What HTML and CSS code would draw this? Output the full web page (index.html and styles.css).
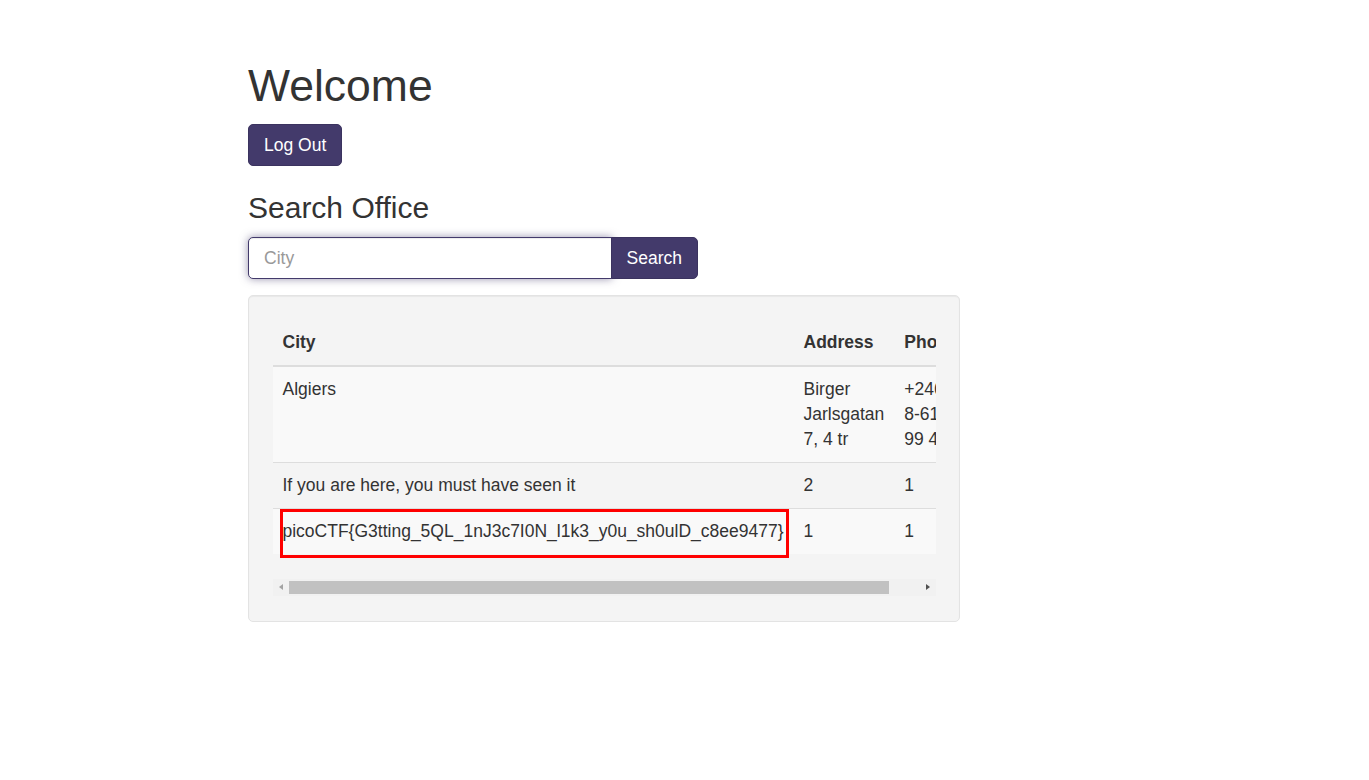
FILE: index.html
```html
<!DOCTYPE html>
<html lang="en">
<head>
<meta charset="utf-8">
<title>Welcome</title>
<link rel="stylesheet" href="styles.css">
</head>
<body>
<div class="page">
  <h1 class="title">Welcome</h1>
  <button class="btn" type="button">Log Out</button>
  <h2 class="subtitle">Search Office</h2>
  <form class="search">
    <input class="search-input" type="text" placeholder="City">
    <button class="btn btn-attached" type="button">Search</button>
  </form>
  <div class="well">
    <div class="scroll-view">
      <table class="offices">
        <thead>
          <tr><th>City</th><th>Address</th><th>Phone</th></tr>
        </thead>
        <tbody>
          <tr class="odd"><td>Algiers</td><td>Birger Jarlsgatan 7, 4 tr</td><td>+246 8-611 99 40</td></tr>
          <tr><td>If you are here, you must have seen it</td><td>2</td><td>1</td></tr>
          <tr class="odd"><td class="flag">picoCTF{G3tting_5QL_1nJ3c7I0N_l1k3_y0u_sh0ulD_c8ee9477}</td><td>1</td><td>1</td></tr>
        </tbody>
      </table>
    </div>
    <div class="scrollbar">
      <div class="arrow arrow-left"></div>
      <div class="track"><div class="thumb"></div></div>
      <div class="arrow arrow-right"></div>
    </div>
  </div>
</div>
</body>
</html>
```

FILE: styles.css
```css
html, body {
  margin: 0;
  padding: 0;
  background: #fff;
}

body {
  font-family: "Liberation Sans", Arial, sans-serif;
  font-size: 17.5px;
  line-height: 25px;
  color: #333;
}

.page {
  width: 712px;
  padding: 36px 0 0 248px;
}

.title {
  margin: 25px 0 13.5px;
  font-size: 44.5px;
  font-weight: normal;
  line-height: 49.5px;
}

.btn {
  display: inline-block;
  margin: 0;
  padding: 7.5px 15px;
  font-family: inherit;
  font-size: 17.5px;
  line-height: 25px;
  color: #fff;
  background: #433a6b;
  border: 1px solid #3b335f;
  border-radius: 5px;
  cursor: pointer;
}

.subtitle {
  margin: 25px 0 13px;
  font-size: 30px;
  font-weight: normal;
  line-height: 33px;
}

.search {
  display: flex;
  width: 450px;
  margin: 0 0 16px;
}

.search-input {
  flex: 1;
  box-sizing: border-box;
  height: 42px;
  margin: 0;
  padding: 7.5px 15px;
  font-family: inherit;
  font-size: 17.5px;
  color: #555;
  background: #fff;
  border: 1px solid #433a6b;
  border-radius: 5px 0 0 5px;
  box-shadow: inset 0 1px 1px rgba(0, 0, 0, 0.075), 0 0 9px rgba(67, 58, 107, 0.55);
  outline: none;
}

.search-input::placeholder {
  color: #999;
}

.btn-attached {
  height: 42px;
  border-radius: 0 5px 5px 0;
  margin-left: -1px;
}

.well {
  box-sizing: border-box;
  width: 712px;
  padding: 23.5px 23.5px 25px;
  background: #f4f4f4;
  border: 1px solid #e3e3e3;
  border-radius: 5px;
  box-shadow: inset 0 1px 1px rgba(0, 0, 0, 0.05);
}

.scroll-view {
  overflow: hidden;
}

.offices {
  width: 100%;
  margin-bottom: 25px;
  border-collapse: collapse;
  border-spacing: 0;
}

.offices th,
.offices td {
  padding: 10px;
  text-align: left;
}

.offices th {
  font-weight: bold;
  vertical-align: bottom;
  border-bottom: 2.5px solid #ddd;
}

.offices td {
  vertical-align: top;
  border-top: 1.25px solid #ddd;
}

.offices thead + tbody tr:first-child td {
  border-top: 0;
}

.offices tr.odd td {
  background: #f9f9f9;
}

.offices .flag {
  position: relative;
  white-space: nowrap;
}

.offices .flag::after {
  content: "";
  position: absolute;
  left: 7.5px;
  top: 0;
  width: 509px;
  height: 49px;
  box-sizing: border-box;
  border: 3px solid #ff0000;
}

.scrollbar {
  display: flex;
  height: 17px;
  background: #f1f1f1;
}

.arrow {
  width: 16.5px;
  flex: none;
  position: relative;
}

.arrow::before {
  content: "";
  position: absolute;
  top: 5px;
  border-top: 3.5px solid transparent;
  border-bottom: 3.5px solid transparent;
}

.arrow-left::before {
  left: 6px;
  border-right: 4px solid #a3a3a3;
}

.arrow-right::before {
  left: 7px;
  border-left: 4px solid #505050;
}

.track {
  flex: 1;
  padding-top: 2px;
}

.thumb {
  width: 600px;
  height: 13px;
  background: #c1c1c1;
}
```
